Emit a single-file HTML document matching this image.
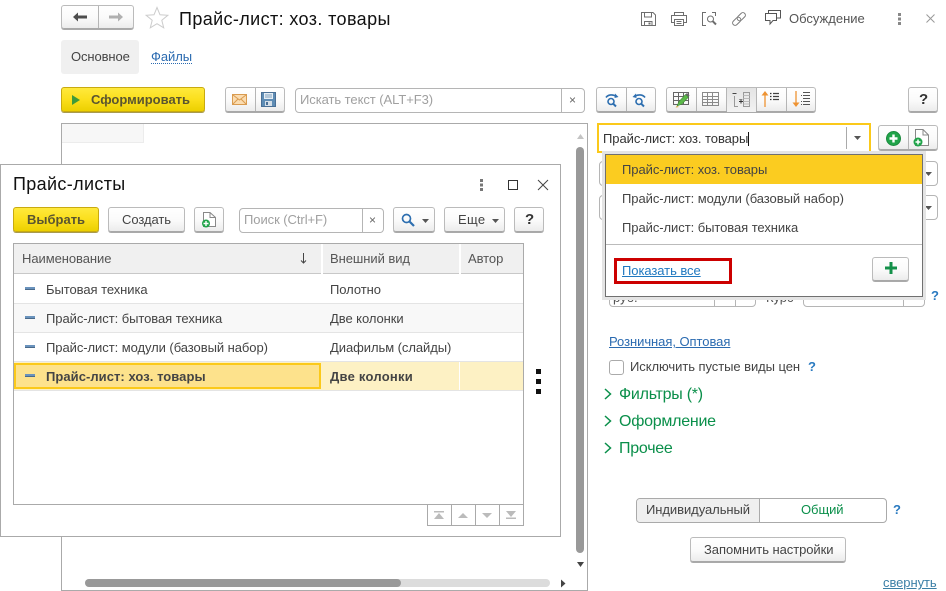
<!DOCTYPE html>
<html><head><meta charset="utf-8"><title>Прайс-лист</title>
<style>
html,body{margin:0;padding:0;background:#fff;}
#p{position:relative;width:946px;height:591px;overflow:hidden;background:#fff;font-family:"Liberation Sans",Arial,sans-serif;font-size:13px;color:#3a3a3a;}
#p div,#p span.t,#p svg{position:absolute;box-sizing:border-box;}
.t{white-space:nowrap;line-height:16px;height:16px;letter-spacing:-.06px;color:#444;}
.b{background:linear-gradient(#fff 0%,#fafafa 55%,#ececec 100%);border:1px solid #bbb;border-bottom-color:#a8a8a8;border-radius:3px;box-shadow:0 1px 0 #aaa;}
.y{background:linear-gradient(#ffe93c 0%,#fbdf1c 50%,#ecd000 100%);border:1px solid #c8aa10;border-radius:3px;box-shadow:0 1px 0 #a89a50;}
.v{width:1px;background:#b5b5b5;}
.in{border:1px solid #b5b5b5;border-radius:4px;background:#fff;}
.h{background:#bbb;height:1px;}
.g{color:#0a8f4a;font-size:16px;letter-spacing:-.25px;}
.hb{font-weight:bold;letter-spacing:0;color:#5a5530;}
.q{font-weight:bold;color:#2a7ac0;}
.ph{color:#a0a0a0;}
.hd{color:#555;}
</style></head><body><div id="p">

<!-- top nav -->
<div class="b" style="left:61px;top:5px;width:73px;height:24px"></div>
<div class="v" style="left:98px;top:6px;height:22px"></div>
<svg style="left:72px;top:11px" width="16" height="12" viewBox="0 0 16 12"><path d="M1 6 6 1.500V4.500H15V7.500H6V10.500Z" fill="#4d4d4d"/></svg>
<svg style="left:108px;top:11px" width="16" height="12" viewBox="0 0 16 12"><path d="M15 6 10 1.500V4.500H1V7.500H10V10.500Z" fill="#b0b0b0"/></svg>
<svg style="left:145px;top:6px" width="24" height="23" viewBox="0 0 24 23"><path d="M12 1.500 15 8.800 22.800 9.300 16.800 14.300 18.700 21.800 12 17.700 5.300 21.800 7.200 14.300 1.200 9.300 9 8.800Z" fill="#fff" stroke="#ccc"/></svg>
<span class="t" style="left:179px;top:9px;font-size:18px;line-height:20px;height:20px;color:#111;letter-spacing:.38px">Прайс-лист: хоз. товары</span>

<!-- top right icons -->
<svg style="left:640px;top:11px" width="17" height="16" viewBox="0 0 17 16" fill="none" stroke="#6e6e6e"><path d="M1.500 1.500H13L15.500 4V14.500H1.500Z"/><path d="M4.500 1.500V6H11.500V1.500M4.500 14.500V10.500H12V14.500"/><rect x="8.500" y="11.500" width="2" height="2" fill="#6e6e6e" stroke="none"/></svg>
<svg style="left:670px;top:11px" width="18" height="16" viewBox="0 0 18 16" fill="none" stroke="#6e6e6e"><path d="M4.500 4.500V1.500H13.500V4.500M4.500 11.500H1.500V4.500H16.500V11.500H13.500"/><path d="M4.500 8.500H13.500V14.500H4.500Z"/><path d="M6.500 10.500H11.500M6.500 12.500H11.500"/></svg>
<svg style="left:701px;top:11px" width="17" height="16" viewBox="0 0 17 16" fill="none" stroke="#6e6e6e"><path d="M5 1.500H1.500V14.500H5M11 1.500H14.500V5"/><circle cx="9.500" cy="8" r="3"/><path d="M11.700 10.200 15 13.500" stroke-width="2"/></svg>
<svg style="left:731px;top:11px" width="16" height="16" viewBox="0 0 16 16" fill="none" stroke="#7a7a7a"><g transform="rotate(-45 8 8)"><rect x="0" y="5.500" width="9.500" height="5" rx="2.500"/><rect x="6.500" y="5.500" width="9.500" height="5" rx="2.500"/></g></svg>
<svg style="left:764px;top:9px" width="18" height="17" viewBox="0 0 18 17" fill="none" stroke="#555"><path d="M1.500 4.500H12.500V11.500H9L6 15V11.500H1.500Z"/><path d="M4.500 4V1.500H16.500V9H13"/></svg>
<span class="t" style="left:789px;top:11px;color:#555;letter-spacing:0">Обсуждение</span>
<svg style="left:897px;top:13px" width="6" height="12" viewBox="0 0 6 12" fill="#888"><rect x="1" y="0" width="3" height="3"/><rect x="1" y="4.500" width="3" height="3"/><rect x="1" y="9" width="3" height="3"/></svg>
<svg style="left:925px;top:13px" width="11" height="11" viewBox="0 0 11 11" stroke="#999" fill="none"><path d="M1.500 1.500 9.500 9.500M9.500 1.500 1.500 9.500"/></svg>

<!-- tabs -->
<div style="left:61px;top:40px;width:78px;height:34px;background:#f0f0f0;border-radius:3px"></div>
<span class="t" style="left:71px;top:49px;letter-spacing:-.1px">Основное</span>
<span class="t" style="left:151px;top:49px;color:#2a6ab0;border-bottom:1px dotted #2a6ab0;height:15px">Файлы</span>

<!-- toolbar -->
<div class="y" style="left:61px;top:87px;width:144px;height:25px"></div>
<svg style="left:71px;top:95px" width="10" height="10"><path d="M1 0 9 5 1 10Z" fill="#3f9a3a"/></svg>
<span class="t hb" style="left:91px;top:92px">Сформировать</span>

<div class="b" style="left:225px;top:87px;width:60px;height:25px"></div>
<div class="v" style="left:255px;top:88px;height:23px"></div>
<svg style="left:232px;top:94px" width="16" height="12" viewBox="0 0 16 12"><rect x=".5" y=".5" width="14" height="10" fill="#fbdcb0" stroke="#d99b50"/><path d="M1 1 7.500 6 14 1M1 10 6 5M14 10 9 5" fill="none" stroke="#d99b50"/></svg>
<svg style="left:261px;top:92px" width="15" height="15" viewBox="0 0 15 15"><rect x=".5" y=".5" width="14" height="14" fill="#5f8db5" stroke="#4a7096"/><rect x="3" y="1" width="9" height="6" fill="#e6eef5"/><path d="M4 3H11M4 5H11" stroke="#7fa0bd"/><rect x="4" y="9" width="7" height="5" fill="#d5dfe8"/><rect x="5" y="10" width="2" height="3" fill="#4a7096"/></svg>

<div class="in" style="left:295px;top:88px;width:290px;height:25px"></div>
<div class="v" style="left:561px;top:89px;height:23px"></div>
<span class="t ph" style="left:300px;top:92px">Искать текст (ALT+F3)</span>
<span class="t" style="left:569px;top:92px;font-size:12px;color:#666">×</span>

<!-- right toolbar -->
<div class="b" style="left:596px;top:87px;width:60px;height:25px"></div>
<div class="v" style="left:626px;top:88px;height:23px"></div>
<svg style="left:604px;top:92px" width="16" height="16" viewBox="0 0 16 16" fill="none" stroke="#2e6fb0" stroke-width="1.600"><path d="M2 5.500C4 2.500 9 2 12.500 4.500"/><path d="M11 1.500 14.500 5 10.500 6" fill="#2e6fb0" stroke="none"/><circle cx="7" cy="9.500" r="3"/><path d="M9.300 11.800 12 14.500" stroke-width="2"/></svg>
<svg style="left:631px;top:92px" width="16" height="16" viewBox="0 0 16 16" fill="none" stroke="#2e6fb0" stroke-width="1.600"><path d="M14 5.500C12 2.500 7 2 3.500 4.500"/><path d="M5 1.500 1.500 5 5.500 6" fill="#2e6fb0" stroke="none"/><circle cx="8" cy="9.500" r="3"/><path d="M10.300 11.800 13 14.500" stroke-width="2"/></svg>

<div class="b" style="left:666px;top:87px;width:150px;height:25px"></div>
<div style="left:727px;top:88px;width:29px;height:24px;background:linear-gradient(#e4e4e4,#f2f2f2)"></div>
<div class="v" style="left:696px;top:88px;height:23px"></div>
<div class="v" style="left:726px;top:88px;height:23px"></div>
<div class="v" style="left:756px;top:88px;height:23px"></div>
<div class="v" style="left:786px;top:88px;height:23px"></div>
<svg style="left:673px;top:91px" width="17" height="17" viewBox="0 0 17 17" fill="none"><path d="M.5 1.500H15.500V13.500H.5ZM.5 5.500H15.500M.5 9.500H15.500M5.500 1.500V13.500M10.500 1.500V13.500" stroke="#666"/><path d="M4 15 6 10.500 12.500 3.500 15.500 6 9 13Z" fill="#5cb94a" stroke="#3f8a33" stroke-width=".6"/><path d="M12.500 3.500 14 2 16.500 4.500 15.500 6Z" fill="#666"/><path d="M2.500 16.500 4 15 6 16Z" fill="#e0a030"/></svg>
<svg style="left:702px;top:92px" width="17" height="14" viewBox="0 0 17 14" fill="none" stroke="#8a8a8a"><path d="M.5 .5H16.500V13.500H.5ZM.5 4.500H16.500M.5 7.500H16.500M.5 10.500H16.500M5.500 .5V13.500M10.500 .5V13.500"/></svg>
<svg style="left:732px;top:91px" width="18" height="17" viewBox="0 0 18 17" fill="none"><path d="M.5 2.500H4.500" stroke="#444"/><path d="M2.500 5V15.500H6M7 8.500H10.500" stroke="#999"/><path d="M7 10.500H11M9 8.500V12.500" stroke="#333"/><rect x="11.500" y="1.500" width="6" height="14" stroke="#999"/><path d="M11.500 4.500H17.500M11.500 7.500H17.500M11.500 10.500H17.500M11.500 13H17.500" stroke="#bbb"/></svg>
<svg style="left:761px;top:91px" width="18" height="16" viewBox="0 0 18 16" fill="none"><path d="M4 4V16" stroke="#ee9333" stroke-width="1.300"/><path d="M4 0 7.500 4.500H.5Z" fill="#ee9333"/><path d="M9 2.500H10.500M9 5.500H10.500M9 8.500H10.500" stroke="#333" stroke-width="1.300"/><path d="M12 2.500H18M12 5.500H18M12 8.500H18" stroke="#444" stroke-width="1.300"/></svg>
<svg style="left:792px;top:91px" width="18" height="17" viewBox="0 0 18 17" fill="none"><path d="M4 0V12" stroke="#ee9333" stroke-width="1.300"/><path d="M4 16 .5 11.500H7.500Z" fill="#ee9333"/><path d="M11 1.500H18M11 4.500H18M11 7.500H18M11 10.500H18M11 13.500H18" stroke="#555" stroke-width="1.100"/><path d="M9 4.500H10M9 10.500H10M9 13.500H10" stroke="#555"/></svg>

<div class="b" style="left:908px;top:87px;width:30px;height:25px"></div>
<span class="t" style="left:919px;top:92px;font-size:15px;font-weight:bold;color:#333">?</span>

<!-- main frame -->
<div style="left:61px;top:123px;width:527px;height:468px;border:1px solid #aaa"></div>
<div style="left:62px;top:124px;width:82px;height:19px;background:#f7f7f7;border-right:1px solid #ececec;border-bottom:1px solid #ececec"></div>
<svg style="left:576px;top:132px" width="9" height="8"><path d="M4.500 2 8 7H1Z" fill="#c4c4c4"/></svg>
<div style="left:576px;top:147px;width:8px;height:406px;background:#999;border-radius:4px"></div>
<svg style="left:576px;top:561px" width="9" height="6"><path d="M1 1H8L4.500 6Z" fill="#444"/></svg>
<div style="left:85px;top:579px;width:465px;height:8px;background:#dcdcdc;border-radius:4px"></div>
<div style="left:85px;top:579px;width:316px;height:8px;background:#999;border-radius:4px"></div>
<svg style="left:560px;top:579px" width="6" height="9"><path d="M1 .5 5.500 4.500 1 8.500Z" fill="#444"/></svg>

<!-- right panel -->
<div style="left:597px;top:123px;width:274px;height:30px;border:2px solid #fbc91a;background:#fff"></div>
<span class="t" style="left:603px;top:131px;color:#333">Прайс-лист: хоз. товары</span>
<div style="left:748px;top:132px;width:1px;height:14px;background:#111"></div>
<div class="v" style="left:846px;top:127px;height:22px;background:#aaa"></div>
<svg style="left:854px;top:136px" width="7" height="5"><path d="M0 0H7L3.500 4Z" fill="#555"/></svg>
<div class="b" style="left:878px;top:125px;width:60px;height:25px"></div>
<div class="v" style="left:908px;top:126px;height:23px"></div>
<svg style="left:886px;top:131px" width="15" height="15" viewBox="0 0 15 15"><circle cx="7.500" cy="7.500" r="7" fill="#21a44a" stroke="#1a8a3d"/><path d="M7.500 3.500V11.500M3.500 7.500H11.500" stroke="#fff" stroke-width="2.400"/></svg>
<svg style="left:913px;top:129px" width="16" height="18" viewBox="0 0 16 18"><path d="M2.500 .5H10L15.500 6V16.500H2.500Z" fill="#fff" stroke="#888"/><path d="M10 .5V6H15.500" fill="none" stroke="#888"/><circle cx="5" cy="13" r="4.500" fill="#21a44a"/><path d="M5 10.500V15.500M2.500 13H7.500" stroke="#fff" stroke-width="1.500"/></svg>

<!-- fields under popup -->
<div class="in" style="left:599px;top:161px;width:339px;height:25px"></div>
<div class="in" style="left:599px;top:195px;width:339px;height:25px"></div>
<svg style="left:925px;top:172px" width="7" height="5"><path d="M0 0H7L3.500 4Z" fill="#555"/></svg>
<svg style="left:925px;top:206px" width="7" height="5"><path d="M0 0H7L3.500 4Z" fill="#555"/></svg>
<div class="in" style="left:609px;top:282px;width:147px;height:25px"></div>
<div class="v" style="left:714px;top:283px;height:23px"></div>
<div class="v" style="left:735px;top:283px;height:23px"></div>
<span class="t" style="left:613px;top:290px;color:#555">руб.</span>
<span class="t" style="left:766px;top:290px;color:#555">Курс</span>
<div class="in" style="left:803px;top:282px;width:122px;height:25px"></div>
<div class="v" style="left:903px;top:283px;height:23px"></div>
<span class="t q" style="left:931px;top:288px">?</span>

<!-- popup -->
<div style="left:602px;top:151px;width:324px;height:149px;background:#e4e4e4"></div>
<div style="left:605px;top:154px;width:318px;height:143px;background:#fff;border:1px solid #707070"></div>
<div style="left:606px;top:155px;width:316px;height:29px;background:#fbcc20"></div>
<span class="t" style="left:622px;top:162px">Прайс-лист: хоз. товары</span>
<span class="t" style="left:622px;top:191px">Прайс-лист: модули (базовый набор)</span>
<span class="t" style="left:622px;top:220px">Прайс-лист: бытовая техника</span>
<div class="h" style="left:606px;top:244px;width:316px"></div>
<div style="left:614px;top:258px;width:118px;height:26px;border:3px solid #cc0000"></div>
<span class="t" style="left:622px;top:263px;color:#1f78c0;text-decoration:underline">Показать все</span>
<div class="b" style="left:872px;top:257px;width:37px;height:24px"></div>
<svg style="left:885px;top:262px" width="12" height="12"><path d="M6 0V12M0 6H12" stroke="#14914a" stroke-width="3"/></svg>

<span class="t" style="left:609px;top:334px;color:#2a6ab0;text-decoration:underline;letter-spacing:-.05px">Розничная, Оптовая</span>
<div style="left:609px;top:360px;width:15px;height:15px;border:1px solid #aaa;border-radius:3px;background:#fff"></div>
<span class="t" style="left:630px;top:359px">Исключить пустые виды цен</span>
<span class="t q" style="left:808px;top:359px">?</span>

<svg style="left:604px;top:388px" width="8" height="12" fill="none" stroke="#0a8f4a" stroke-width="1.500"><path d="M1 1 6.500 6 1 11"/></svg>
<span class="t g" style="left:619px;top:387px">Фильтры (*)</span>
<svg style="left:604px;top:415px" width="8" height="12" fill="none" stroke="#0a8f4a" stroke-width="1.500"><path d="M1 1 6.500 6 1 11"/></svg>
<span class="t g" style="left:619px;top:414px">Оформление</span>
<svg style="left:604px;top:442px" width="8" height="12" fill="none" stroke="#0a8f4a" stroke-width="1.500"><path d="M1 1 6.500 6 1 11"/></svg>
<span class="t g" style="left:619px;top:441px">Прочее</span>

<div class="in" style="left:636px;top:498px;width:251px;height:25px;border-color:#aaa"></div>
<div style="left:637px;top:499px;width:123px;height:23px;background:#efefef;border-right:1px solid #aaa;border-radius:3px 0 0 3px"></div>
<span class="t" style="left:646px;top:502px">Индивидуальный</span>
<span class="t" style="left:801px;top:502px;color:#0a8f4a">Общий</span>
<span class="t q" style="left:893px;top:502px">?</span>
<div class="b" style="left:690px;top:537px;width:156px;height:25px"></div>
<span class="t" style="left:704px;top:542px">Запомнить настройки</span>
<span class="t" style="left:883px;top:575px;color:#3c7fa6;text-decoration:underline">свернуть</span>

<!-- dialog -->
<div style="left:0;top:164px;width:561px;height:373px;background:#fff;border:1px solid #aaa"></div>
<span class="t" style="left:13px;top:174px;font-size:18px;line-height:20px;height:20px;color:#111;letter-spacing:.35px">Прайс-листы</span>
<svg style="left:479px;top:179px" width="5" height="12" fill="#777"><rect x="1" y="0" width="3" height="3"/><rect x="1" y="4.500" width="3" height="3"/><rect x="1" y="9" width="3" height="3"/></svg>
<div style="left:508px;top:180px;width:10px;height:10px;border:1.500px solid #333"></div>
<svg style="left:537px;top:179px" width="12" height="12" fill="none" stroke="#444"><path d="M1 1 11 11M11 1 1 11"/></svg>

<div class="y" style="left:13px;top:207px;width:86px;height:25px"></div>
<span class="t hb" style="left:27px;top:212px">Выбрать</span>
<div class="b" style="left:108px;top:207px;width:77px;height:25px"></div>
<span class="t" style="left:122px;top:212px">Создать</span>
<div class="b" style="left:194px;top:207px;width:30px;height:25px"></div>
<svg style="left:201px;top:212px" width="15" height="16" viewBox="0 0 15 16"><path d="M2.500 .5H9L14.500 5.500V14.500H2.500Z" fill="#fff" stroke="#888"/><path d="M9 .5V5.500H14.500" fill="none" stroke="#888"/><circle cx="5" cy="11.500" r="4" fill="#21a44a"/><path d="M5 9V14M2.500 11.500H7.500" stroke="#fff" stroke-width="1.400"/></svg>
<div class="in" style="left:239px;top:208px;width:145px;height:25px"></div>
<div class="v" style="left:362px;top:209px;height:23px"></div>
<span class="t ph" style="left:244px;top:212px">Поиск (Ctrl+F)</span>
<span class="t" style="left:369px;top:212px;font-size:12px;color:#666">×</span>
<div class="b" style="left:393px;top:207px;width:42px;height:25px"></div>
<svg style="left:401px;top:213px" width="14" height="14" fill="none" stroke="#2e6fb0" stroke-width="1.700"><circle cx="5.500" cy="5.500" r="4"/><path d="M8.500 8.500 13 13" stroke-width="2.200"/></svg>
<svg style="left:422px;top:219px" width="7" height="5"><path d="M0 0H7L3.500 4Z" fill="#555"/></svg>
<div class="b" style="left:444px;top:207px;width:61px;height:25px"></div>
<span class="t" style="left:458px;top:212px;letter-spacing:.3px">Еще</span>
<svg style="left:492px;top:219px" width="7" height="5"><path d="M0 0H7L3.500 4Z" fill="#555"/></svg>
<div class="b" style="left:514px;top:207px;width:30px;height:25px"></div>
<span class="t" style="left:525px;top:212px;font-size:15px;font-weight:bold;color:#333">?</span>

<!-- table -->
<div style="left:13px;top:243px;width:511px;height:262px;border:1px solid #aaa;background:#fff"></div>
<div style="left:14px;top:244px;width:509px;height:30px;background:#f0f0f0;border-bottom:1px solid #c8c8c8"></div>
<div style="left:321px;top:244px;width:2px;height:30px;background:#fff"></div>
<div style="left:459px;top:244px;width:2px;height:30px;background:#fff"></div>
<span class="t hd" style="left:22px;top:251px">Наименование</span>
<span class="t hd" style="left:330px;top:251px">Внешний вид</span>
<span class="t hd" style="left:468px;top:251px">Автор</span>
<svg style="left:300px;top:253px" width="7" height="11" fill="none" stroke="#444"><path d="M3.500 0V10M1 7.500 3.500 10 6 7.500"/></svg>

<div style="left:14px;top:304px;width:509px;height:28px;background:#f8f8f8"></div>
<div class="h" style="left:14px;top:303px;width:509px;background:#e4e4e4"></div>
<div class="h" style="left:14px;top:332px;width:509px;background:#e4e4e4"></div>
<div class="h" style="left:14px;top:361px;width:509px;background:#e4e4e4"></div>
<div class="h" style="left:14px;top:390px;width:509px;background:#e4e4e4"></div>
<div style="left:25px;top:287px;width:10px;height:3px;background:#6a93bd;border-bottom:1px solid #4a6a8a"></div>
<div style="left:25px;top:316px;width:10px;height:3px;background:#6a93bd;border-bottom:1px solid #4a6a8a"></div>
<div style="left:25px;top:345px;width:10px;height:3px;background:#6a93bd;border-bottom:1px solid #4a6a8a"></div>
<span class="t" style="left:46px;top:282px">Бытовая техника</span>
<span class="t" style="left:46px;top:311px">Прайс-лист: бытовая техника</span>
<span class="t" style="left:46px;top:340px">Прайс-лист: модули (базовый набор)</span>
<span class="t" style="left:330px;top:282px">Полотно</span>
<span class="t" style="left:330px;top:311px">Две колонки</span>
<span class="t" style="left:330px;top:340px">Диафильм (слайды)</span>

<div style="left:14px;top:362px;width:509px;height:28px;background:#fdf1c4"></div>
<div style="left:14px;top:363px;width:307px;height:26px;background:#fde28c;border:2px solid #fbc91a"></div>
<div style="left:459px;top:362px;width:1px;height:28px;background:#fff"></div>
<div style="left:25px;top:374px;width:10px;height:3px;background:#6a93bd;border-bottom:1px solid #4a6a8a"></div>
<span class="t" style="left:46px;top:369px;font-weight:bold;letter-spacing:.05px">Прайс-лист: хоз. товары</span>
<span class="t" style="left:330px;top:369px;font-weight:bold;letter-spacing:.25px">Две колонки</span>

<div style="left:536px;top:369px;width:5px;height:5px;background:#111"></div>
<div style="left:536px;top:379px;width:5px;height:5px;background:#111"></div>
<div style="left:536px;top:389px;width:5px;height:5px;background:#111"></div>

<!-- table nav -->
<div style="left:427px;top:504px;width:97px;height:22px;border:1px solid #aaa;background:#fff"></div>
<div class="v" style="left:451px;top:504px;height:22px;background:#aaa"></div>
<div class="v" style="left:475px;top:504px;height:22px;background:#aaa"></div>
<div class="v" style="left:499px;top:504px;height:22px;background:#aaa"></div>
<svg style="left:434px;top:511px" width="11" height="9" fill="#bbb"><rect width="10" height="1.500"/><path d="M5 2 10 8H0Z"/></svg>
<svg style="left:458px;top:512px" width="11" height="7" fill="#bbb"><path d="M5 1 10 6H0Z"/></svg>
<svg style="left:482px;top:512px" width="11" height="7" fill="#bbb"><path d="M0 1H10L5 6Z"/></svg>
<svg style="left:506px;top:511px" width="11" height="9" fill="#bbb"><path d="M0 0H10L5 6Z"/><rect y="6.500" width="10" height="1.500"/></svg>

</div></body></html>
